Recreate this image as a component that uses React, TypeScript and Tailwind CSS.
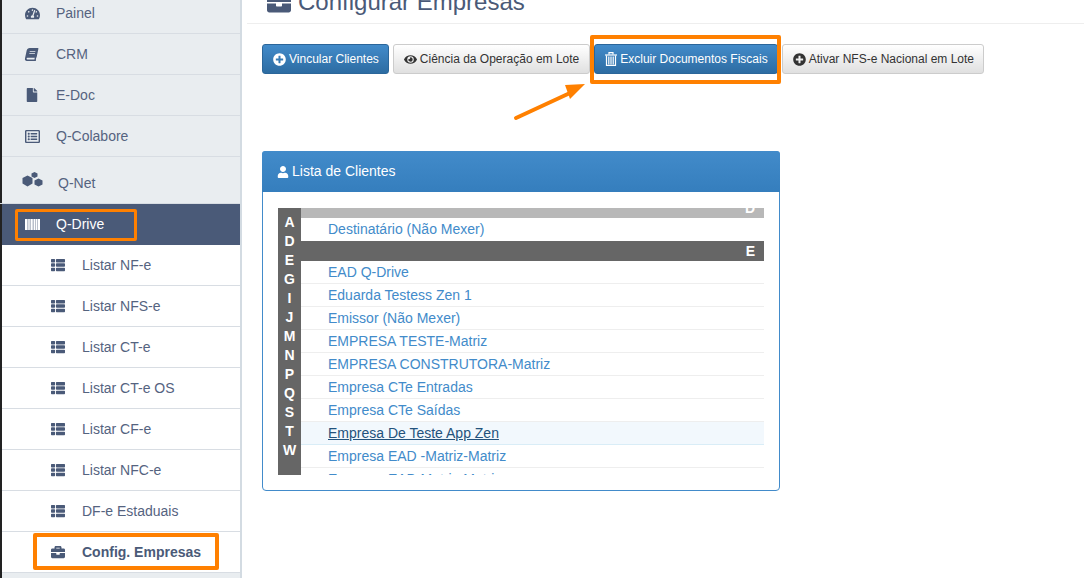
import { FaBook, FaBriefcase, FaEye, FaFile, FaPlusCircle, FaRegListAlt, FaTachometerAlt, FaThList, FaUser } from "react-icons/fa";
import type { ReactNode } from "react";

const font = "font-['Liberation_Sans',Arial,sans-serif]";

function Hex() {
  return (
    <svg width="21" height="16" viewBox="0 0 21 16" fill="#4a5a78">
      <polygon points="5.5,3.5 10.5,6 10.5,11.5 5.5,14.5 0.5,11.5 0.5,6" />
      <polygon points="12.5,0 15.5,1.5 15.5,4.5 12.5,6 9.5,4.5 9.5,1.5" />
      <polygon points="16.5,6.5 20.5,8.5 20.5,12.5 16.5,14.5 12.5,12.5 12.5,8.5" />
    </svg>
  );
}

function Barcode() {
  return (
    <svg width="15" height="11" viewBox="0 0 15 11">
      <rect width="15" height="11" fill="#fff" opacity=".62" />
      <rect x="0" width="2" height="11" fill="#fff" />
      <rect x="3.5" width="1" height="11" fill="#fff" />
      <rect x="6" width="1.5" height="11" fill="#fff" />
      <rect x="9" width="1" height="11" fill="#fff" />
      <rect x="11" width="1" height="11" fill="#fff" />
      <rect x="13" width="2" height="11" fill="#fff" />
    </svg>
  );
}

function Trash() {
  return (
    <svg width="12" height="14" viewBox="0 0 12 14" fill="none" stroke="#fff" strokeWidth="1.2">
      <path d="M0 3H12" />
      <path d="M4 2.5V.6H8V2.5" />
      <path d="M1.5 3.5V13.4H10.5V3.5" />
      <path d="M3.8 4.5V12.5M6 4.5V12.5M8.2 4.5V12.5" />
    </svg>
  );
}

function TopItem({ icon, label }: { icon: ReactNode; label: string }) {
  return (
    <div className="flex h-[41px] items-center border-b border-[#d8dde3] pl-[23px] text-[14px] text-[#55637f]">
      <span className="flex w-[31px] text-[#4a5a78]">{icon}</span>
      <span>{label}</span>
    </div>
  );
}

function SubItem({ label, icon, bold = false }: { label: string; icon?: ReactNode; bold?: boolean }) {
  return (
    <div className={`flex h-[41px] items-center border-b border-[#d8dde3] pl-[49px] text-[14px] ${bold ? "font-bold text-[#4a5a78]" : "text-[#55637f]"}`}>
      <span className="flex w-[31px] text-[#4a5a78]">{icon ?? <FaThList size={14} />}</span>
      <span>{label}</span>
    </div>
  );
}

function Btn({ primary, icon, label, wide }: { primary?: boolean; icon: ReactNode; label: string; wide?: boolean }) {
  return (
    <div
      className={`flex h-[30px] items-center gap-[3px] whitespace-nowrap rounded-[3px] border pl-[10px] text-[12px] ${wide ? "pr-[10px]" : "pr-[9px]"} ${
        primary
          ? "border-[#2b669a] bg-gradient-to-b from-[#428bca] to-[#2d6ca2] text-white"
          : "border-[#cccccc] bg-gradient-to-b from-white to-[#e0e0e0] text-[#333333]"
      }`}
    >
      {icon}
      <span>{label}</span>
    </div>
  );
}

const rowsE = [
  "EAD Q-Drive",
  "Eduarda Testess Zen 1",
  "Emissor (Não Mexer)",
  "EMPRESA TESTE-Matriz",
  "EMPRESA CONSTRUTORA-Matriz",
  "Empresa CTe Entradas",
  "Empresa CTe Saídas",
  "Empresa De Teste App Zen",
  "Empresa EAD -Matriz-Matriz",
  "Empresa EAD Matriz-Matriz",
];

const letters = ["A", "D", "E", "G", "I", "J", "M", "N", "P", "Q", "S", "T", "W"];

export default function App() {
  return (
    <div className={`${font} relative flex h-[578px] w-[1084px] overflow-hidden bg-white`}>
      <aside className="flex h-full w-[242px] shrink-0 border-l-2 border-[#222222] bg-[#e9edf0]">
        <div className="-mt-[7px] w-[238px] shrink-0">
          <TopItem icon={<FaTachometerAlt size={15} />} label="Painel" />
          <TopItem icon={<FaBook size={13} className="-skew-x-12" />} label="CRM" />
          <TopItem icon={<FaFile size={14} />} label="E-Doc" />
          <TopItem icon={<FaRegListAlt size={15} />} label="Q-Colabore" />
          <div className="-ml-[2px] flex h-[47px] items-center border-b border-[#d8dde3] pl-[22px] text-[14px] text-[#55637f]">
            <span className="flex w-[36px]"><Hex /></span>
            <span className="translate-y-[3px]">Q-Net</span>
          </div>
          <div className="flex h-[41px] items-center bg-[#4a5a78] pl-[23px] text-[14px] text-white">
            <span className="flex w-[31px]"><Barcode /></span>
            <span>Q-Drive</span>
          </div>
          <div className="bg-white">
            <SubItem label="Listar NF-e" />
            <SubItem label="Listar NFS-e" />
            <SubItem label="Listar CT-e" />
            <SubItem label="Listar CT-e OS" />
            <SubItem label="Listar CF-e" />
            <SubItem label="Listar NFC-e" />
            <SubItem label="DF-e Estaduais" />
            <SubItem label="Config. Empresas" bold icon={<FaBriefcase size={14} />} />
          </div>
        </div>
        <div className="h-full w-[2px] bg-[#d3dbe2]" />
      </aside>

      <main className="min-w-0 flex-1">
        <div className="ml-[5px] flex h-[24px] items-end overflow-hidden border-b border-[#eeeeee] pl-[20px]">
          <div className="flex -translate-y-[6px] items-center gap-[7px] text-[24px] leading-[30px] text-[#4a5a78]">
            <FaBriefcase size={24} />
            <span>Configurar Empresas</span>
          </div>
        </div>

        <div className="mt-[20px] flex gap-[4px] pl-[20px]">
          <Btn primary icon={<FaPlusCircle size={13} />} label="Vincular Clientes" />
          <Btn wide icon={<FaEye size={13} />} label="Ciência da Operação em Lote" />
          <Btn primary icon={<Trash />} label="Excluir Documentos Fiscais" />
          <Btn icon={<FaPlusCircle size={13} />} label="Ativar NFS-e Nacional em Lote" />
        </div>

        <section className="ml-[20px] mt-[77px] h-[340px] w-[518px] rounded-[4px] border border-[#428bca]">
          <div className="-mx-px -mt-px flex h-[41px] items-center gap-[3px] rounded-t-[3px] bg-gradient-to-b from-[#428bca] to-[#357ebd] pl-[15px] text-[14px] text-white">
            <FaUser size={12} />
            <span>Lista de Clientes</span>
          </div>
          <div className="mx-[15px] mt-[16px] flex h-[267px] w-[486px] overflow-hidden">
            <div className="w-[23px] shrink-0 bg-[#666666] pt-[4.5px] text-center text-[14px] font-bold leading-[19px] text-white">
              {letters.map((l) => (
                <div key={l}>{l}</div>
              ))}
            </div>
            <div className="min-w-0 flex-1 text-[14px] text-[#428bca]">
              <div className="flex h-[10px] items-end justify-end overflow-hidden bg-[#b8b8b8] pr-[9px] font-bold leading-[20px] text-white">
                <span>D</span>
              </div>
              <div className="flex h-[23px] items-center pl-[27px]">Destinatário (Não Mexer)</div>
              <div className="flex h-[20px] items-center justify-end bg-[#666666] pr-[9px] font-bold text-white">E</div>
              {rowsE.map((r) => {
                const hot = r === "Empresa De Teste App Zen";
                return (
                  <div
                    key={r}
                    className={`flex h-[23px] items-center border-b pl-[27px] ${
                      hot ? "border-[#d9edf7] bg-[#f2f8fd] text-[#23527c] underline" : "border-[#eeeeee]"
                    }`}
                  >
                    {r}
                  </div>
                );
              })}
            </div>
          </div>
        </section>
      </main>

      <div className="absolute left-[15px] top-[209px] h-[32px] w-[122px] rounded-[2px] border-[3px] border-[#ff8000]" />
      <div className="absolute left-[33px] top-[533px] h-[37px] w-[186px] rounded-[2px] border-[4px] border-[#ff8000]" />
      <div className="absolute left-[590px] top-[35px] h-[49px] w-[191px] rounded-[2px] border-[4px] border-[#ff8000]" />
      <svg className="absolute left-[510px] top-[80px]" width="80" height="42" viewBox="0 0 80 42">
        <path d="M6 38 L60 13" stroke="#ff8000" strokeWidth="4" strokeLinecap="round" />
        <polygon points="75,4 55,5 60,19" fill="#ff8000" />
      </svg>
    </div>
  );
}
